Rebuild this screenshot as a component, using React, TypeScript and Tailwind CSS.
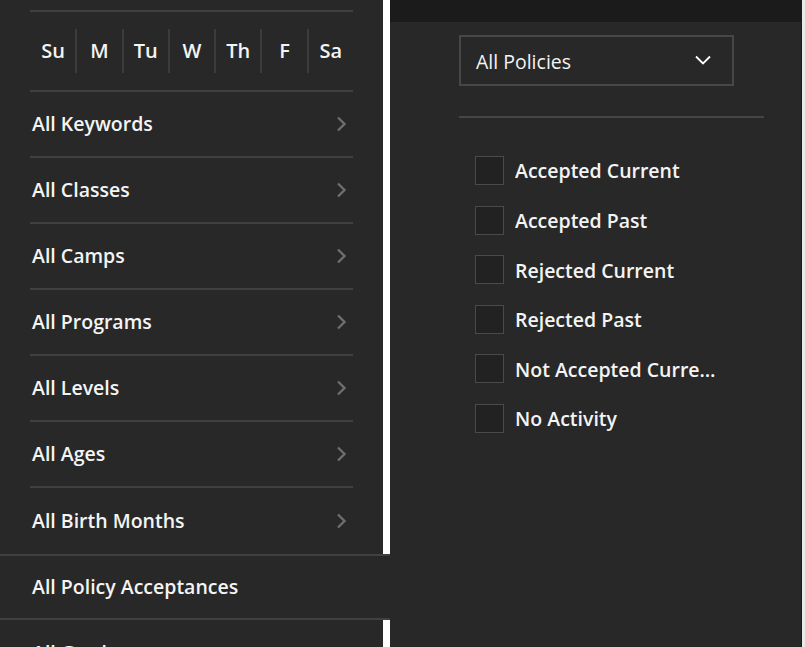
const days = ['Su', 'M', 'Tu', 'W', 'Th', 'F', 'Sa'];

const filters = [
  'All Keywords',
  'All Classes',
  'All Camps',
  'All Programs',
  'All Levels',
  'All Ages',
  'All Birth Months',
];

const policyOptions = [
  'Accepted Current',
  'Accepted Past',
  'Rejected Current',
  'Rejected Past',
  'Not Accepted Current',
  'No Activity',
];

function Chevron() {
  return (
    <svg width="12" height="16" viewBox="0 0 12 16" fill="none" className="mr-[5px]">
      <polyline points="2,1.5 8.5,8 2,14.5" stroke="#6e6e6e" strokeWidth="2.4" />
    </svg>
  );
}

export default function App() {
  return (
    <div
      className="flex h-[647px] w-[805px] overflow-hidden bg-[#e9e9e9] text-[#f4f4f4]"
      style={{ fontFamily: '"Open Sans", "Noto Sans", sans-serif' }}
    >
      {/* filter list; white strip on the right shows through except on the selected row */}
      <div className="flex w-[390px] shrink-0 flex-col bg-white">
        <div className="w-[383px] shrink-0 bg-[#282828] px-[30px] pt-[10px]">
          <div className="h-[2px] bg-[#404040]" />
          <div className="flex h-[80px] items-center border-b-2 border-[#404040] pb-[1px] pl-[1px]">
            {days.map((d, i) => (
              <div
                key={d}
                className={
                  'flex h-[44px] flex-1 items-center justify-center text-[20px] font-semibold ' +
                  (i > 0 ? 'border-l-2 border-[#3c3c3c]' : '')
                }
              >
                {d}
              </div>
            ))}
          </div>
        </div>

        {filters.map((f, i) => (
          <div key={f} className="w-[383px] shrink-0 bg-[#282828] px-[30px]">
            <div
              className={
                'flex h-[66px] items-center justify-between pl-[2px] ' +
                (i < filters.length - 1 ? 'border-b-2 border-[#404040]' : '')
              }
            >
              <span className="text-[19.5px] font-semibold">{f}</span>
              <Chevron />
            </div>
          </div>
        ))}

        <div className="flex h-[66px] shrink-0 items-center border-y-2 border-[#404040] bg-[#282828] pl-[32px]">
          <span className="text-[19.5px] font-semibold">All Policy Acceptances</span>
        </div>

        <div className="w-[383px] shrink-0 bg-[#282828] px-[30px]">
          <div className="flex h-[66px] items-center pl-[2px]">
            <span className="text-[19.5px] font-semibold">All Grades</span>
          </div>
        </div>
      </div>

      {/* policy panel */}
      <div className="flex w-[412px] shrink-0 flex-col border-r border-[#1c1c1c] bg-[#282828]">
        <div className="h-[22px] shrink-0 bg-[#1b1b1b]" />
        <div className="px-[69px] pt-[13px]">
          <div className="flex h-[51px] w-[275px] items-center justify-between border-2 border-[#474747] pl-[15px] pr-[21px] pt-[3px]">
            <span className="text-[19.5px]">All Policies</span>
            <svg width="16" height="10" viewBox="0 0 16 10" fill="none" className="mb-[4px]">
              <polyline points="1,1.5 8,8.5 15,1.5" stroke="#ffffff" strokeWidth="1.8" />
            </svg>
          </div>
          <div className="mt-[30px] h-[2px] w-[305px] bg-[#454545]" />
          <div className="mt-[38px] flex flex-col gap-[20.6px] pl-[16px]">
            {policyOptions.map((p) => (
              <label key={p} className="flex h-[29px] items-center gap-[11px]">
                <span className="h-[29px] w-[29px] shrink-0 border border-[#4a4a4a] bg-[#222222]" />
                <span className="w-[202px] truncate pt-[1px] text-[19.5px] font-semibold">{p}</span>
              </label>
            ))}
          </div>
        </div>
      </div>
    </div>
  );
}
